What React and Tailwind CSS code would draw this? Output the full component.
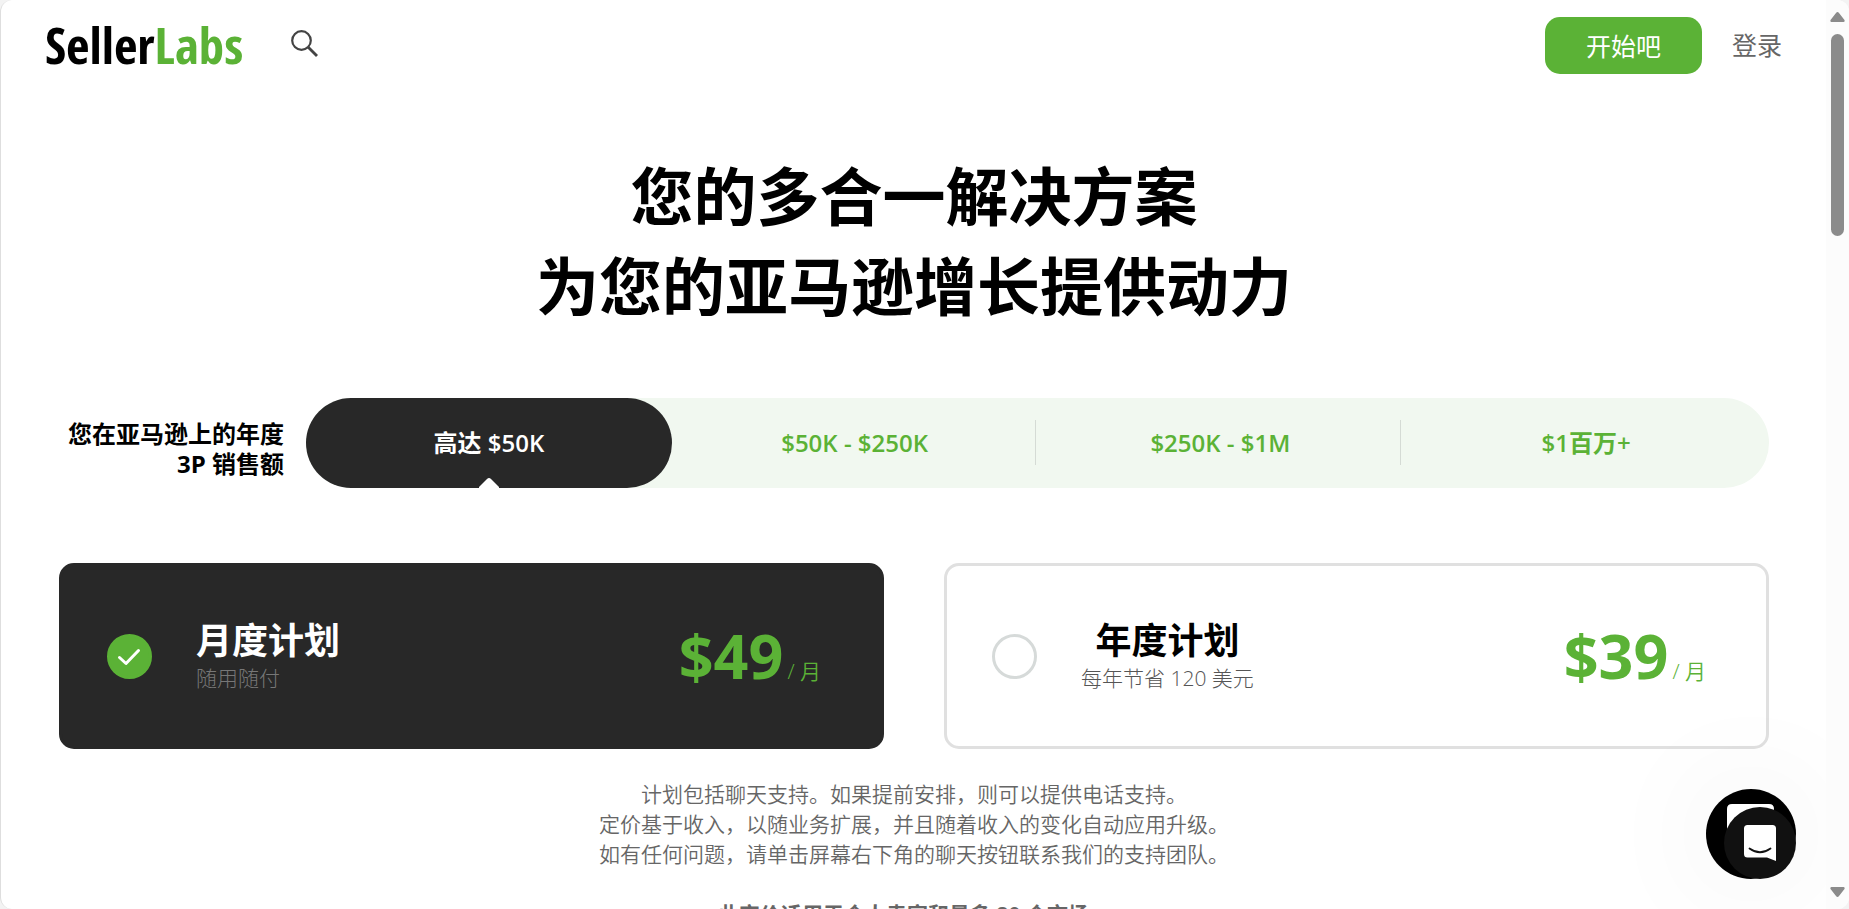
import React, { useState } from "react";

const ranges = [
    { id: "50k", label: "高达 $50K" },
    { id: "250k", label: "$50K - $250K" },
    { id: "1m", label: "$250K - $1M" },
    { id: "1m-plus", label: "$1百万+" },
];

const plans = [
    { id: "monthly", name: "月度计划", note: "随用随付", price: "$49" },
    { id: "yearly", name: "年度计划", note: "每年节省 120 美元", price: "$39" },
];

function Header() {
    return (
        <header className="flex items-center justify-between pl-11 pr-11 pt-[17px]">
            <div className="flex items-center gap-12">
                <a
                    href="#"
                    className="pb-1 font-['Open_Sans_Condensed','Noto_Sans_Condensed','Roboto_Condensed','Liberation_Sans_Narrow','Open_Sans',sans-serif] text-[51px] leading-[52px] font-extrabold text-black"
                >
                    Seller<span className="text-[#5bb236]">Labs</span>
                </a>
                <button type="button" aria-label="搜索" className="pb-1">
                    <svg
                        className="w-[27px] h-[27px]"
                        viewBox="0 0 27 27"
                        fill="none"
                        stroke="#444"
                    >
                        <circle cx="10.5" cy="10.5" r="9.3" strokeWidth="2.2" />
                        <path d="M17 17l9 9" strokeWidth="2.8" />
                    </svg>
                </button>
            </div>
            <div className="flex items-center gap-[30px]">
                <button
                    type="button"
                    className="h-[57px] w-[157px] rounded-[15px] bg-[#5bb236] pt-[2px] text-[25px] text-white"
                >
                    开始吧
                </button>
                <a href="#" className="text-[25px] text-[#666]">
                    登录
                </a>
            </div>
        </header>
    );
}

function RangeTabs({ active, onChange }) {
    return (
        <div className="flex items-center">
            <p className="w-[225px] shrink-0 pt-3 text-right text-[24px] leading-[30px] font-bold text-black">
                您在亚马逊上的年度
                <br />
                3P 销售额
            </p>
            <div className="ml-[22px] grid h-[90px] flex-1 grid-cols-4 rounded-full bg-[#f1f8f0]">
                {ranges.map((range, i) => {
                    const isActive = range.id === active;
                    return (
                        <button
                            key={range.id}
                            type="button"
                            onClick={() => onChange(range.id)}
                            className={`relative text-[24px] font-semibold ${
                                isActive
                                    ? "rounded-full bg-[#282828] text-white"
                                    : "text-[#5bb236]"
                            }`}
                        >
                            {range.label}
                            {!isActive && i < ranges.length - 1 && (
                                <span className="absolute right-[2px] top-[22px] h-[45px] w-px bg-[#d5dbd5]" />
                            )}
                            {isActive && (
                                <svg
                                    className="absolute bottom-0 left-1/2 h-[10px] w-[20px] -translate-x-1/2"
                                    viewBox="0 0 20 10"
                                    fill="#fff"
                                >
                                    <path d="M0 10V9L8 1Q10-1 12 1L20 9V10Z" />
                                </svg>
                            )}
                        </button>
                    );
                })}
            </div>
        </div>
    );
}

function PlanCard({ plan, selected, onSelect }) {
    return (
        <label
            className={`flex h-[186px] cursor-pointer items-center rounded-[15px] border-[3px] pl-[45px] pr-[60px] ${
                selected
                    ? "border-[#282828] bg-[#282828]"
                    : "border-[#e0e0e0] bg-white"
            }`}
        >
            <span className="relative size-[45px] shrink-0">
                <input
                    type="radio"
                    name="plan"
                    checked={selected}
                    onChange={() => onSelect(plan.id)}
                    className="block size-[45px] appearance-none rounded-full border-[3px] border-[#d6dad9] checked:border-[#5bb236] checked:bg-[#5bb236]"
                />
                {selected && (
                    <svg
                        className="pointer-events-none absolute inset-0 size-[45px]"
                        viewBox="0 0 45 45"
                        fill="none"
                        stroke="#fff"
                        strokeWidth="3"
                        strokeLinecap="round"
                        strokeLinejoin="round"
                    >
                        <path d="M12.5 23.5l6.5 6L31.5 16.5" />
                    </svg>
                )}
            </span>
            <span className="ml-11 flex flex-col items-center">
                <span
                    className={`text-[36px] leading-[44px] font-bold ${
                        selected ? "text-white" : "text-black"
                    }`}
                >
                    {plan.name}
                </span>
                <span
                    className={`text-[21px] leading-[30px] font-light ${
                        selected ? "self-start text-[#777]" : "text-[#555]"
                    }`}
                >
                    {plan.note}
                </span>
            </span>
            <span className="ml-auto flex items-baseline gap-1 text-[#5bb236]">
                <span className="text-[61px] leading-[70px] font-bold">
                    {plan.price}
                </span>
                <span className="text-[21px] font-[350]">/ 月</span>
            </span>
        </label>
    );
}

function ChatButton() {
    return (
        <button
            type="button"
            aria-label="聊天"
            className="absolute bottom-[30px] right-[30px] size-[90px] rounded-full shadow-[0_0_120px_rgba(0,0,0,0.08)]"
        >
            <svg className="size-[90px]" viewBox="0 0 90 90">
                <circle cx="45" cy="45" r="45" fill="#000" />
                <path
                    d="M21 60V20q0-5 5-5h37q5 0 5 5v40z"
                    fill="#fff"
                />
                <circle cx="54" cy="54" r="36" fill="#111" />
                <path
                    d="M70 72l-9-3.500H41.500q-3.500 0-3.500-3.500V39.500q0-3.500 3.500-3.500h25q3.500 0 3.500 3.500z"
                    fill="#fff"
                />
                <path
                    d="M43.500 59.500q10.500 7.500 21 0"
                    fill="none"
                    stroke="#111"
                    strokeWidth="1.800"
                    strokeLinecap="round"
                />
            </svg>
        </button>
    );
}

function Scrollbar() {
    return (
        <div className="flex w-[23px] shrink-0 flex-col items-center bg-[#fcfcfc] py-3">
            <svg className="h-[10px] w-[15px]" viewBox="0 0 15 10" fill="#8b8b8b">
                <path d="M6 1Q7.500-1 9 1L14.500 8Q15 10 13.500 10H1.500Q0 10 .5 8Z" />
            </svg>
            <div className="mt-3 h-[202px] w-[13px] rounded-full bg-[#8b8b8b]" />
            <svg
                className="mt-auto h-[10px] w-[15px]"
                viewBox="0 0 15 10"
                fill="#8b8b8b"
            >
                <path d="M6 9Q7.500 11 9 9L14.500 2Q15 0 13.500 0H1.500Q0 0 .5 2Z" />
            </svg>
        </div>
    );
}

export default function App() {
    const [range, setRange] = useState("50k");
    const [plan, setPlan] = useState("monthly");

    return (
        <div className="h-screen bg-[#f3f3f3] font-['Open_Sans','Noto_Sans_CJK_SC',sans-serif]">
            <div className="flex h-full overflow-hidden rounded-[12px] border-l border-[#dedede] bg-white">
                <div className="relative flex-1 overflow-hidden">
                    <Header />

                    <main className="pl-[58px] pr-[57px]">
                        <h1 className="pt-[77px] text-center text-[63px] leading-[90px] font-bold text-black">
                            您的多合一解决方案
                            <br />
                            为您的亚马逊增长提供动力
                        </h1>

                        <div className="mt-[67px]">
                            <RangeTabs active={range} onChange={setRange} />
                        </div>

                        <div className="mt-[75px] grid grid-cols-2 gap-[60px]">
                            {plans.map((item) => (
                                <PlanCard
                                    key={item.id}
                                    plan={item}
                                    selected={item.id === plan}
                                    onSelect={setPlan}
                                />
                            ))}
                        </div>

                        <div className="pt-[30px] text-center text-[21px] leading-[30px] text-[#666]">
                            <p className="font-[350]">
                                计划包括聊天支持。如果提前安排，则可以提供电话支持。
                                <br />
                                定价基于收入，以随业务扩展，并且随着收入的变化自动应用升级。
                                <br />
                                如有任何问题，请单击屏幕右下角的聊天按钮联系我们的支持团队。
                            </p>
                            <p className="mt-[30px] font-bold">
                                此定价适用于个人卖家和最多 20 个市场。
                            </p>
                        </div>
                    </main>

                    <ChatButton />
                </div>
                <Scrollbar />
            </div>
        </div>
    );
}
